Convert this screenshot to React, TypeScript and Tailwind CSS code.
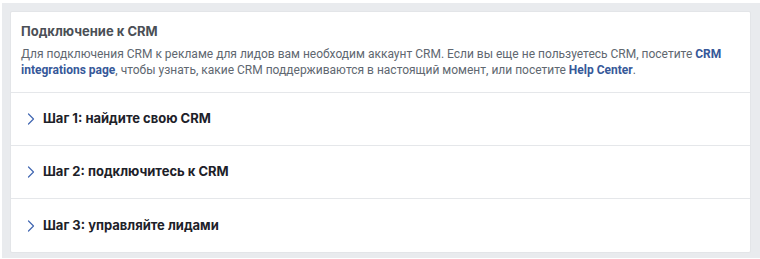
export default function App() {
  const steps = [
    "Шаг 1: найдите свою CRM",
    "Шаг 2: подключитесь к CRM",
    "Шаг 3: управляйте лидами",
  ];

  return (
    <div className="w-[760px] h-[259px] bg-white pl-[2px] pt-[3px] font-['Inter',sans-serif]">
      <div className="bg-[#e9ebee] pl-2 pt-2 pr-[9px] pb-[5px]">
        <div className="bg-white rounded-[2px] border border-[#e3e5e8]">
          {/* Header */}
          <div className="px-[10px] pt-[11px] pb-[14px] border-b border-[#e5e7ea]">
            <h2 className="text-[13px] leading-4 font-bold text-[#4b4f56]">Подключение к CRM</h2>
            <p className="mt-[7px] text-[12px] leading-[16px] text-[#606770] font-['Roboto',sans-serif]">
              Для подключения CRM к рекламе для лидов вам необходим аккаунт CRM. Если вы еще не пользуетесь
              CRM, посетите{" "}
              <a className="font-bold text-[#365899]">CRM integrations page</a>, чтобы узнать, какие CRM
              поддерживаются в настоящий момент, или посетите{" "}
              <a className="font-bold text-[#365899]">Help Center</a>.
            </p>
          </div>

          {/* Steps */}
          {steps.map((s, i) => (
            <div
              key={s}
              className={`flex items-center gap-2 pl-4 h-[53px] ${i < steps.length - 1 ? "border-b border-[#e5e7ea]" : ""}`}
            >
              <svg width="8" height="12" viewBox="0 0 8 12" fill="none" className="shrink-0">
                <path d="M1.5 1 L6.5 6 L1.5 11" stroke="#4267b2" strokeWidth="1.2" strokeLinecap="round" strokeLinejoin="round" />
              </svg>
              <span className="text-[13px] font-bold text-[#1d2129]">{s}</span>
            </div>
          ))}
        </div>
      </div>
    </div>
  );
}
